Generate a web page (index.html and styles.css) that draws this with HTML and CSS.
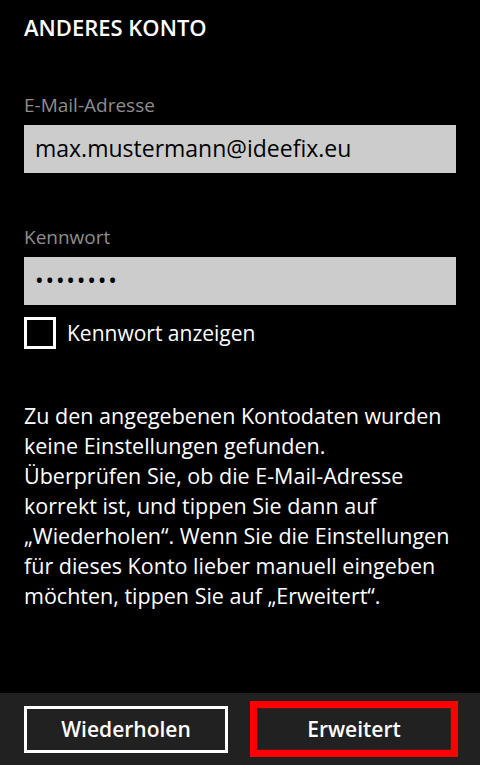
FILE: index.html
```html
<!DOCTYPE html>
<html lang="de">
<head>
<meta charset="utf-8">
<title>Anderes Konto</title>
<link rel="stylesheet" href="styles.css">
</head>
<body>
<div class="page">
  <main class="content">
    <h1 class="title">ANDERES KONTO</h1>
    <div class="field">
      <div class="field-label">E-Mail-Adresse</div>
      <div class="input">max.mustermann@ideefix.eu</div>
    </div>
    <div class="field">
      <div class="field-label">Kennwort</div>
      <div class="input"><span class="dots">••••••••</span></div>
    </div>
    <div class="check-row">
      <span class="checkbox"></span>
      <span class="check-label">Kennwort anzeigen</span>
    </div>
    <p class="message">Zu den angegebenen Kontodaten wurden keine Einstellungen gefunden.<br>Überprüfen Sie, ob die E-Mail-Adresse korrekt ist, und tippen Sie dann auf „Wiederholen“. Wenn Sie die Einstellungen für dieses Konto lieber manuell eingeben möchten, tippen Sie auf „Erweitert“.</p>
  </main>
  <footer class="appbar">
    <div class="btn">Wiederholen</div>
    <div class="btn btn-highlight">Erweitert</div>
  </footer>
</div>
</body>
</html>
```
FILE: styles.css
```css
html, body {
  margin: 0;
  padding: 0;
  background: #000;
}
body {
  font-family: "Open Sans", "Noto Sans", sans-serif;
  color: #fff;
}
.page {
  height: 765px;
  display: flex;
  flex-direction: column;
}
.content {
  flex: 1;
  padding: 0 24px;
}
.title {
  margin: 0;
  padding-top: 14px;
  font-size: 22px;
  line-height: 27px;
  font-weight: 600;
}
.field {
  margin-top: 51px;
}
.field-label {
  font-size: 19px;
  line-height: 26px;
  color: #8e8e8e;
}
.input {
  margin-top: 7px;
  height: 48px;
  background: #cccccc;
  color: #000;
  font-size: 23px;
  line-height: 46px;
  padding-left: 11px;
}
.dots {
  font-size: 23px;
  letter-spacing: 1.8px;
}
.check-row {
  margin-top: 12px;
  display: flex;
  align-items: center;
  gap: 11px;
  height: 32px;
}
.checkbox {
  box-sizing: border-box;
  width: 32px;
  height: 32px;
  border: 3px solid #fff;
}
.check-label {
  font-size: 21px;
  line-height: 32px;
}
.message {
  margin: 52px -14px 0 0;
  font-size: 21.5px;
  line-height: 30px;
}
.appbar {
  height: 72px;
  background: #212121;
  display: flex;
  align-items: center;
  padding: 0 22px 0 24px;
  gap: 22px;
}
.btn {
  box-sizing: border-box;
  width: 204px;
  height: 47px;
  border: 3px solid #fff;
  display: flex;
  align-items: center;
  justify-content: center;
  font-size: 21px;
  font-weight: 600;
}
.btn-highlight {
  width: 208px;
  height: 56px;
  border: 7px solid #ff0000;
  box-shadow: inset 0 0 0 1px #4a1c1c;
}
```
